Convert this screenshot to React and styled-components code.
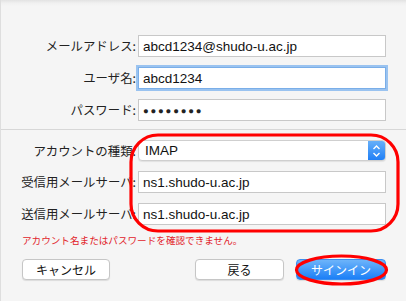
import React from 'react';
import styled, { createGlobalStyle } from 'styled-components';

const GlobalStyle = createGlobalStyle`
  body {
    margin: 0;
    background: #f5f5f5;
  }
`;

const jp = `"Noto Sans CJK JP", "Liberation Sans", sans-serif`;
const latin = `"Liberation Sans", "Noto Sans CJK JP", sans-serif`;

const Sheet = styled.div`
  position: relative;
  width: 406px;
  height: 301px;
  overflow: hidden;
  box-sizing: border-box;
  border-left: 1px solid #dedede;
  background: linear-gradient(#e2e2e2, #f0f0f0 3px, #f5f5f5 6px);
`;

const Form = styled.div`
  display: grid;
  grid-template-columns: 135px 248px;
  column-gap: 2px;
  row-gap: 10px;
  align-items: center;
`;

const TopForm = styled(Form)`
  padding-top: 35px;
`;

const Label = styled.div`
  font-family: ${jp};
  font-size: 12.4px;
  color: #222;
  text-align: right;
  white-space: nowrap;
`;

const Field = styled.div`
  box-sizing: border-box;
  height: 22px;
  display: flex;
  align-items: center;
  padding-left: 4px;
  background: #fff;
  border: 1px solid ${(p) => (p.focused ? '#7aaee8' : '#c8c8c8')};
  box-shadow: ${(p) => (p.focused ? '0 0 0 2px #9ac3f0' : 'none')};
  font-family: ${latin};
  font-size: 13.5px;
  color: #111;
`;

const Dots = styled.span`
  font-size: 9.5px;
  letter-spacing: 1.8px;
  color: #222;
`;

const Separator = styled.div`
  height: 1px;
  background: #d7d7d7;
  margin: 8px 0 10px;
`;

const Select = styled.div`
  box-sizing: border-box;
  height: 21px;
  display: flex;
  align-items: center;
  background: #fff;
  border: 1px solid #cfcfcf;
  border-radius: 4px;
  box-shadow: 0 1px 1px rgba(0, 0, 0, 0.08);
  overflow: hidden;
  font-family: ${latin};
  font-size: 13.5px;
  color: #111;
`;

const SelectText = styled.span`
  flex: 1;
  padding-left: 6px;
`;

const Stepper = styled.div`
  width: 17px;
  align-self: stretch;
  display: flex;
  align-items: center;
  justify-content: center;
  background: linear-gradient(#66aff9, #2180f6);
`;

const ErrorText = styled.div`
  margin: 9px 0 0 21px;
  font-family: ${jp};
  font-size: 9.6px;
  line-height: 12px;
  color: #e2232a;
`;

const Buttons = styled.div`
  display: flex;
  align-items: center;
  margin-top: 13px;
  padding: 0 20px 0 21px;
`;

const Button = styled.div`
  box-sizing: border-box;
  width: ${(p) => p.w}px;
  height: 21px;
  margin-left: ${(p) => p.ml || 0}px;
  display: flex;
  align-items: center;
  justify-content: center;
  border-radius: 4px;
  font-family: ${jp};
  font-size: 12px;
  border: 1px solid ${(p) => (p.primary ? '#3b8ef0' : '#c6c6c6')};
  background: ${(p) => (p.primary ? 'linear-gradient(#6db4fa, #1b7ff7)' : '#fff')};
  color: ${(p) => (p.primary ? '#fff' : '#111')};
  box-shadow: 0 1px 1px rgba(0, 0, 0, 0.1);
`;

const Marks = styled.svg`
  position: absolute;
  left: 0;
  top: 0;
  pointer-events: none;
`;

export default function App() {
  return (
    <>
      <GlobalStyle />
      <Sheet>
        <TopForm>
          <Label>メールアドレス:</Label>
          <Field>abcd1234@shudo-u.ac.jp</Field>
          <Label>ユーザ名:</Label>
          <Field focused>abcd1234</Field>
          <Label>パスワード:</Label>
          <Field>
            <Dots>●●●●●●●●</Dots>
          </Field>
        </TopForm>
        <Separator />
        <Form>
          <Label>アカウントの種類:</Label>
          <Select>
            <SelectText>IMAP</SelectText>
            <Stepper>
              <svg width="9" height="14" viewBox="0 0 9 14">
                <path d="M1.5 5 L4.5 2 L7.5 5 M1.5 9 L4.5 12 L7.5 9" fill="none" stroke="#fff" strokeWidth="1.4" />
              </svg>
            </Stepper>
          </Select>
          <Label>受信用メールサーバ:</Label>
          <Field>ns1.shudo-u.ac.jp</Field>
          <Label>送信用メールサーバ:</Label>
          <Field>ns1.shudo-u.ac.jp</Field>
        </Form>
        <ErrorText>アカウント名またはパスワードを確認できません。</ErrorText>
        <Buttons>
          <Button w={88}>キャンセル</Button>
          <Button w={89} ml={85}>戻る</Button>
          <Button w={90} ml={12} primary>サインイン</Button>
        </Buttons>
        <Marks width="406" height="301" viewBox="0 0 406 301">
          <rect x="130" y="135" width="267" height="96" rx="27" fill="none" stroke="#f00" strokeWidth="3.2" />
          <ellipse cx="340.5" cy="270" rx="45" ry="14" fill="none" stroke="#f00" strokeWidth="3.2" />
        </Marks>
      </Sheet>
    </>
  );
}
